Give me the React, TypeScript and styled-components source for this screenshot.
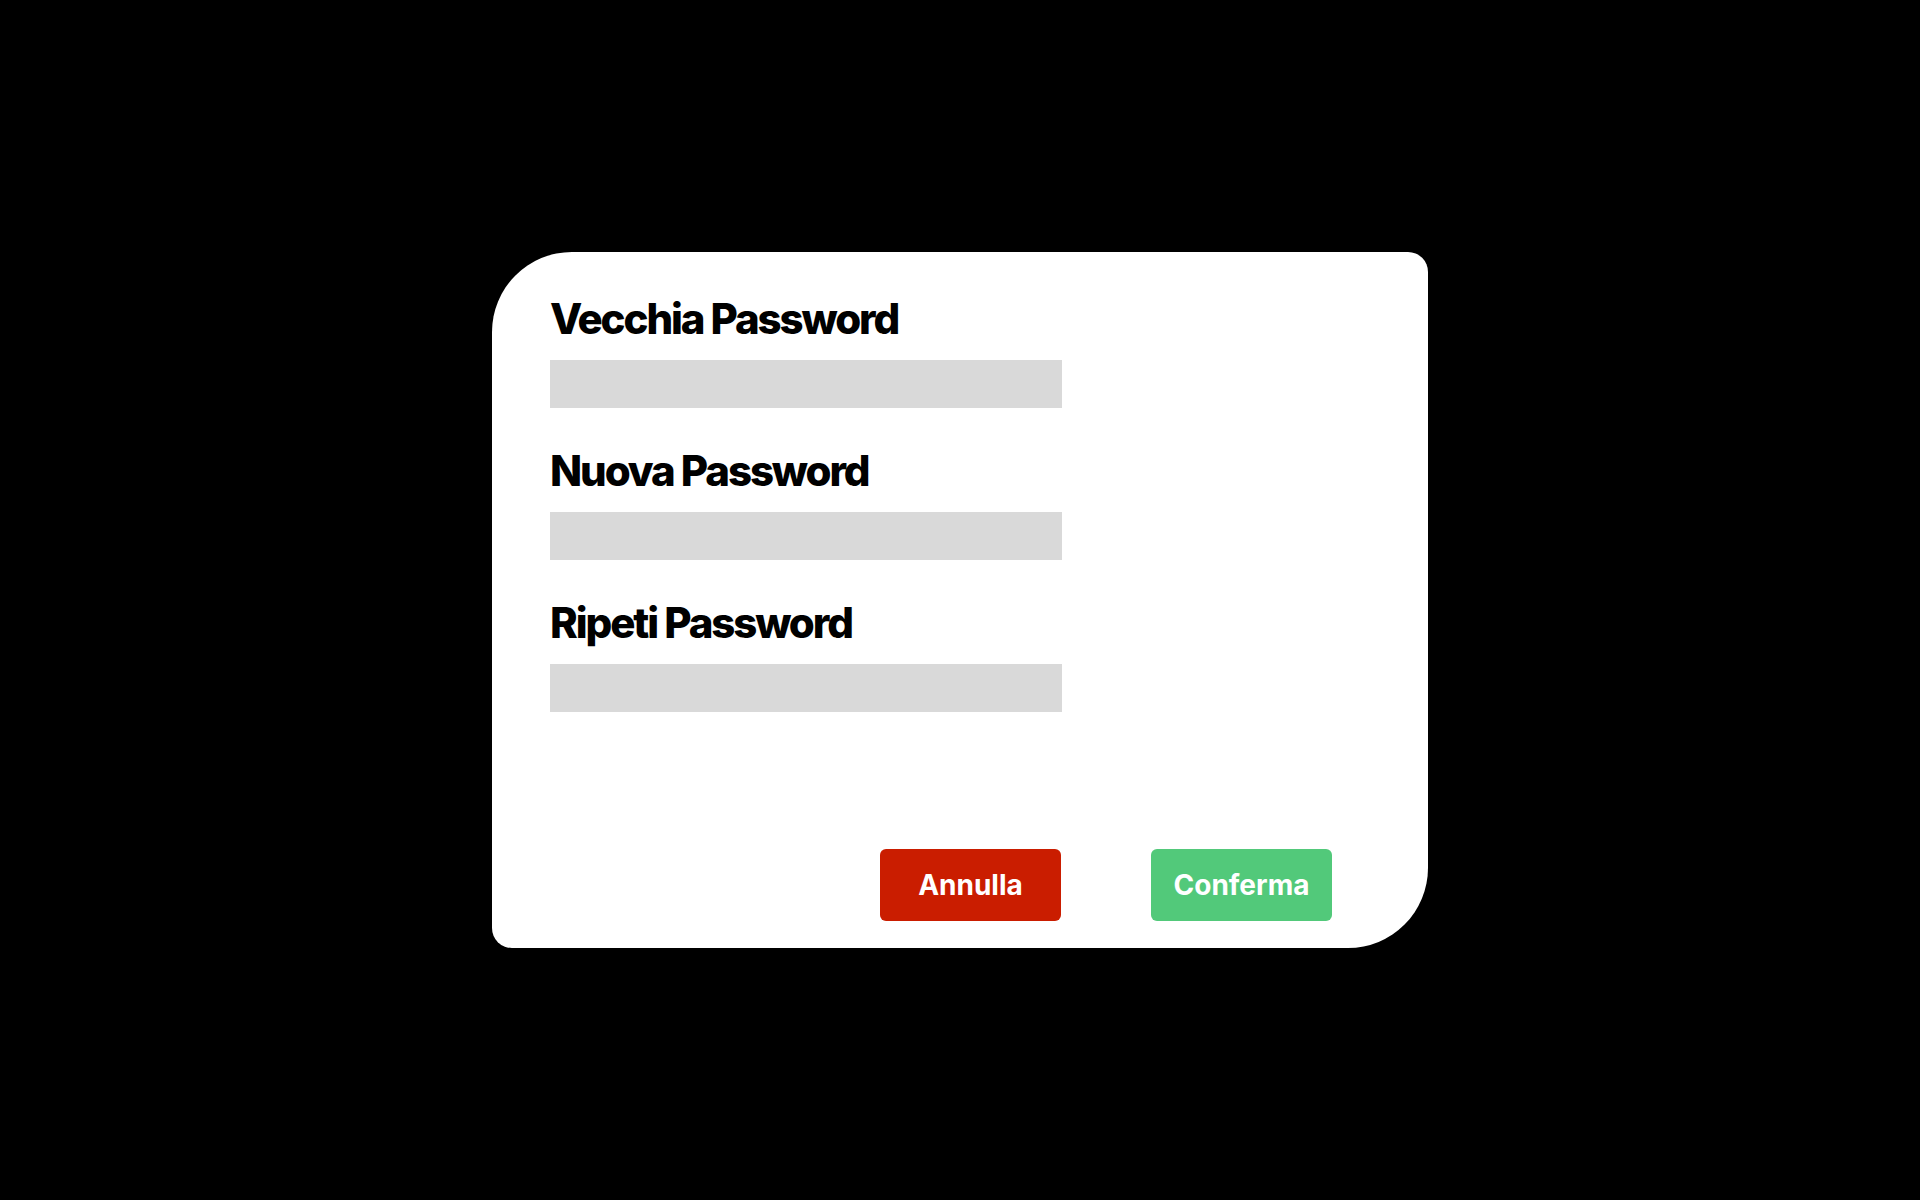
import React from "react";
import styled, { createGlobalStyle } from "styled-components";

const GlobalStyle = createGlobalStyle`
  html, body {
    margin: 0;
    padding: 0;
    background: #000000;
  }
  body {
    font-family: Inter, "Noto Sans", sans-serif;
  }
  * { box-sizing: border-box; }
`;

const Screen = styled.div`
  width: 1920px;
  height: 1200px;
  background: #000000;
  display: flex;
  align-items: center;
  justify-content: center;
`;

const Card = styled.form`
  width: 936px;
  height: 696px;
  background: #ffffff;
  border-radius: 80px 20px 80px 20px;
  padding: 46px 96px 27px 58px;
  display: flex;
  flex-direction: column;
`;

const Fields = styled.div`
  display: flex;
  flex-direction: column;
  gap: 42px;
`;

const Field = styled.div`
  display: flex;
  flex-direction: column;
  gap: 20px;
`;

const Label = styled.label`
  font-family: Inter, "Noto Sans", sans-serif;
  font-weight: 800;
  font-size: 42px;
  line-height: 42px;
  letter-spacing: -0.05em;
  color: #000000;
  margin: 0;
`;

const Input = styled.input`
  width: 512px;
  height: 48px;
  background: #d9d9d9;
  border: none;
  outline: none;
  padding: 0 12px;
  font-family: Inter, sans-serif;
  font-size: 20px;
`;

const Actions = styled.div`
  margin-top: auto;
  display: flex;
  justify-content: flex-end;
  gap: 90px;
`;

const Button = styled.button<{ $tone: "danger" | "success" }>`
  width: 181px;
  height: 72px;
  border: none;
  border-radius: 6px;
  background: ${(p) => (p.$tone === "danger" ? "#ca1d00" : "#52c97a")};
  color: #ffffff;
  font-family: Inter, "Noto Sans", sans-serif;
  font-weight: 700;
  font-size: 28px;
  letter-spacing: 0;
  cursor: pointer;
  display: flex;
  align-items: center;
  justify-content: center;
  padding: 0;
`;

const fields = [
  { id: "old", label: "Vecchia Password" },
  { id: "new", label: "Nuova Password" },
  { id: "repeat", label: "Ripeti Password" },
];

export default function App() {
  return (
    <>
      <GlobalStyle />
      <Screen>
        <Card onSubmit={(e) => e.preventDefault()}>
          <Fields>
            {fields.map((f) => (
              <Field key={f.id}>
                <Label htmlFor={f.id}>{f.label}</Label>
                <Input id={f.id} type="password" />
              </Field>
            ))}
          </Fields>
          <Actions>
            <Button type="button" $tone="danger">Annulla</Button>
            <Button type="submit" $tone="success">Conferma</Button>
          </Actions>
        </Card>
      </Screen>
    </>
  );
}
